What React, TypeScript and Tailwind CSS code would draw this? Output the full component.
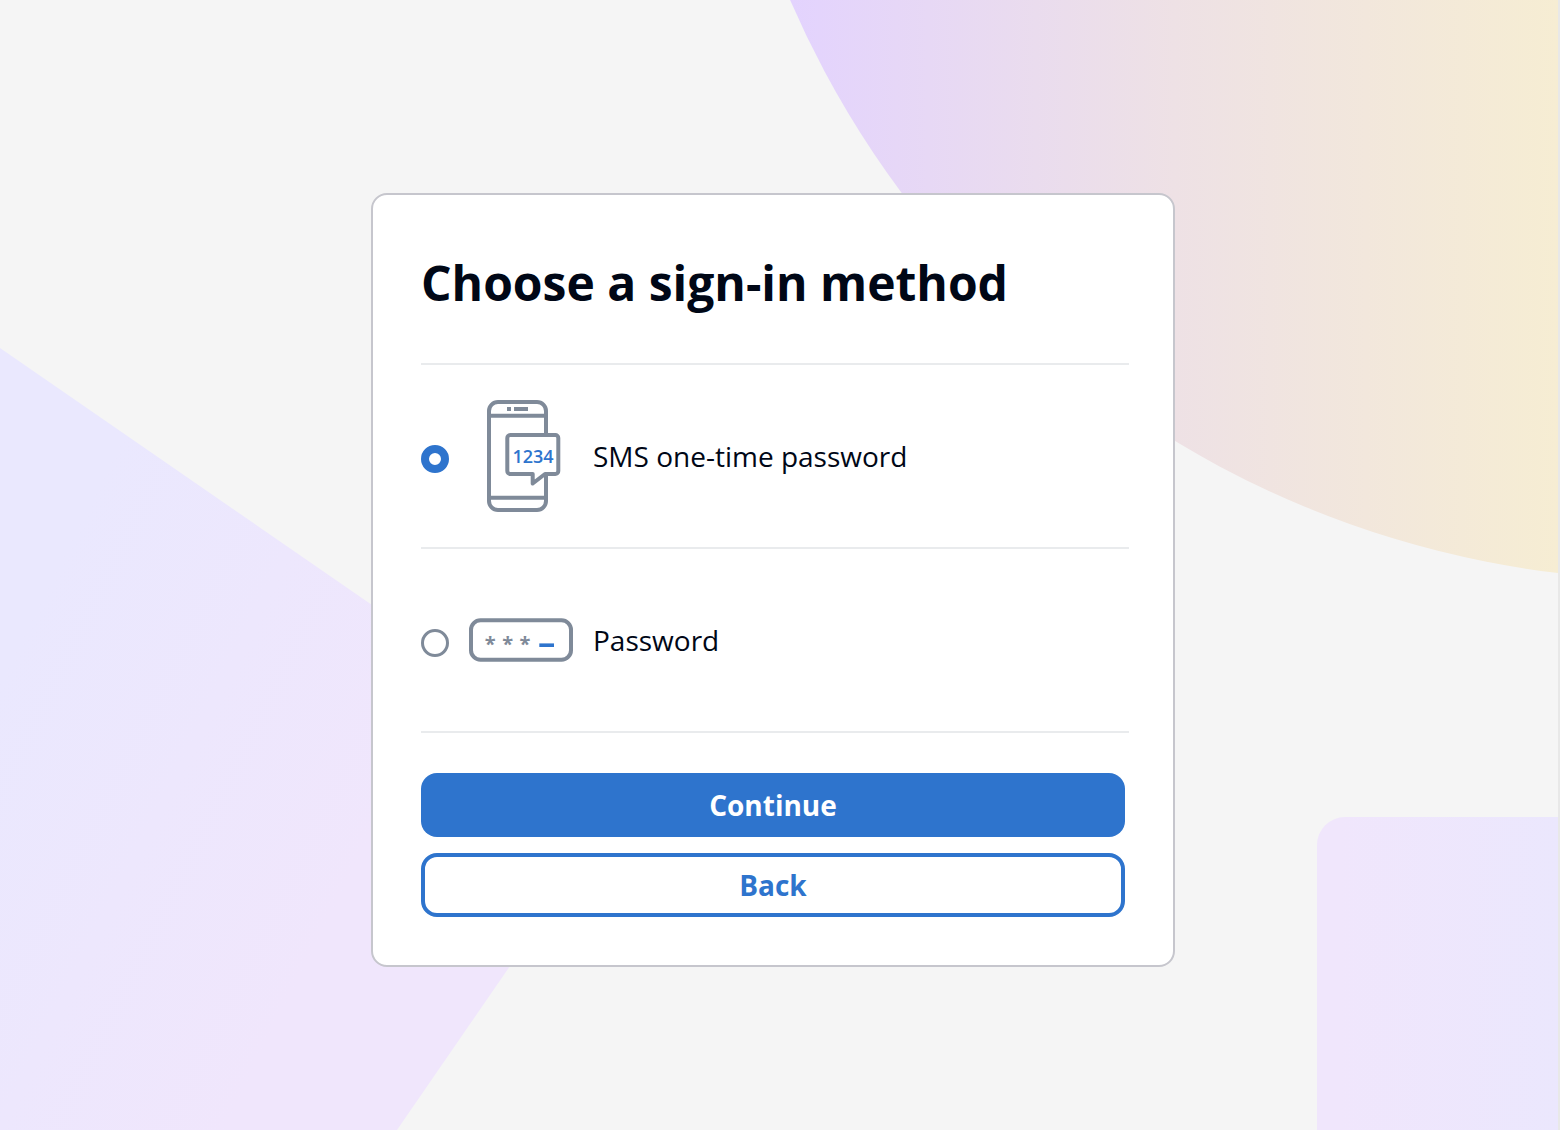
import React, { useState } from "react";

const SmsIcon = () => (
    <svg
        viewBox="0 0 104 112"
        className="h-28 w-[104px] shrink-0"
        fill="none"
        stroke="#7f8a99"
        strokeWidth="4"
        aria-hidden="true"
    >
        <rect x="20" y="2" width="57" height="108" rx="9" />
        <path d="M20 15.7h57M20 97.7h57M38 9h4M45 9h14" />
        <path
            d="M41.3 35h45a3 3 0 0 1 3 3v33a3 3 0 0 1-3 3H76l-12.3 9.5V74H41.3a3 3 0 0 1-3-3V38a3 3 0 0 1 3-3Z"
            fill="#fff"
            strokeLinejoin="round"
        />
        <text
            x="64"
            y="63"
            textAnchor="middle"
            fill="#2e74cd"
            stroke="none"
            fontSize="18"
            fontWeight="600"
        >
            1234
        </text>
    </svg>
);

const PasswordIcon = () => (
    <svg
        viewBox="0 0 104 112"
        className="h-28 w-[104px] shrink-0"
        fill="none"
        aria-hidden="true"
    >
        <rect
            x="2"
            y="36.3"
            width="100"
            height="39.4"
            rx="9.5"
            stroke="#7f8a99"
            strokeWidth="4"
        />
        <g fill="#7f8a99" fontSize="20" fontWeight="700" textAnchor="middle">
            <text x="21.3" y="67">*</text>
            <text x="38.7" y="67">*</text>
            <text x="56" y="67">*</text>
        </g>
        <path d="M70.3 61.2H85" stroke="#2e74cd" strokeWidth="3.6" />
    </svg>
);

const methods = [
    { id: "sms", label: "SMS one-time password", icon: SmsIcon },
    { id: "password", label: "Password", icon: PasswordIcon },
];

// Decorative shapes behind the card
const Backdrop = () => (
    <svg
        viewBox="0 0 1558 1130"
        preserveAspectRatio="xMidYMid slice"
        className="absolute inset-0 h-full w-full"
        aria-hidden="true"
    >
        <defs>
            <linearGradient
                id="circle"
                gradientUnits="userSpaceOnUse"
                x1="790"
                y1="0"
                x2="1558"
                y2="0"
            >
                <stop offset="0" stopColor="#e3d3fe" />
                <stop offset="0.5" stopColor="#eee1e5" />
                <stop offset="1" stopColor="#f6edd3" />
            </linearGradient>
            <linearGradient
                id="diamond"
                gradientUnits="userSpaceOnUse"
                x1="40"
                y1="600"
                x2="400"
                y2="780"
            >
                <stop offset="0" stopColor="#eae8fe" />
                <stop offset="1" stopColor="#f0e6fc" />
            </linearGradient>
            <linearGradient
                id="square"
                gradientUnits="userSpaceOnUse"
                x1="1340"
                y1="0"
                x2="1558"
                y2="0"
            >
                <stop offset="0" stopColor="#f0e6fc" />
                <stop offset="1" stopColor="#ebe7fd" />
            </linearGradient>
        </defs>
        <circle cx="1673" cy="-382" r="962" fill="url(#circle)" />
        <path d="M0 348 634 786 397 1130H0Z" fill="url(#diamond)" />
        <rect
            x="1317"
            y="817"
            width="400"
            height="400"
            rx="28"
            fill="url(#square)"
        />
    </svg>
);

export default function App() {
    const [selected, setSelected] = useState("sms");

    return (
        <main className="relative flex min-h-screen items-center justify-center overflow-hidden border-r-2 border-[#e8e8e8] bg-[#f5f5f5] pt-[30px] pr-3 font-['Open_Sans','Noto_Sans',sans-serif] text-[#000716]">
            <Backdrop />

            <form
                className="relative w-full max-w-[804px] rounded-2xl border-2 border-[#c6c6cd] bg-white p-12"
                onSubmit={(e) => e.preventDefault()}
            >
                <h1 className="pt-2 pb-12 text-5xl leading-[64px] font-bold">
                    Choose a sign-in method
                </h1>

                <div
                    role="radiogroup"
                    aria-label="Sign-in method"
                    className="-mr-1 border-b-2 border-[#e9ebed]"
                >
                    {methods.map((method) => {
                        const Icon = method.icon;

                        return (
                            <label
                                key={method.id}
                                htmlFor={method.id}
                                className="flex items-center gap-5 border-t-2 border-[#e9ebed] py-[35px] text-[28px] leading-10"
                            >
                                <input
                                    id={method.id}
                                    type="radio"
                                    name="method"
                                    checked={selected === method.id}
                                    onChange={() => setSelected(method.id)}
                                    className="mt-1.5 size-7 shrink-0 appearance-none rounded-full border-3 border-[#7f8a99] bg-white checked:border-8 checked:border-[#2e74cd]"
                                />
                                <Icon />
                                <span>{method.label}</span>
                            </label>
                        );
                    })}
                </div>

                <div className="mt-10 flex flex-col gap-4 text-[28px] font-bold">
                    <button
                        type="submit"
                        className="h-16 rounded-2xl bg-[#2e74cd] text-white"
                    >
                        Continue
                    </button>
                    <button
                        type="button"
                        className="h-16 rounded-2xl border-4 border-[#2e74cd] bg-white text-[#2e74cd]"
                    >
                        Back
                    </button>
                </div>
            </form>
        </main>
    );
}
